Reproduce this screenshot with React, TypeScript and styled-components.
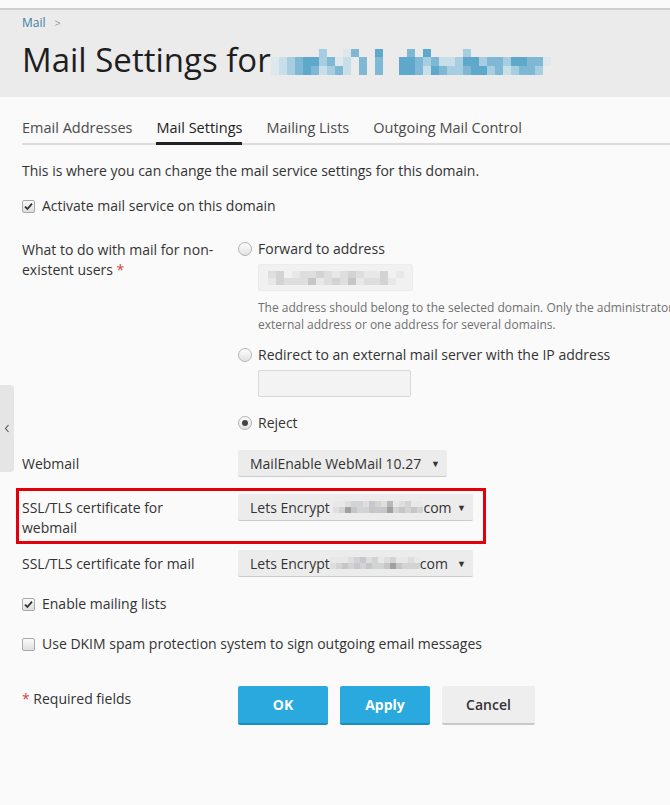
import React from "react";
import styled, { createGlobalStyle, css } from "styled-components";

const GlobalStyle = createGlobalStyle`
  html, body { margin: 0; padding: 0; }
  body {
    background: #fafafa;
    font-family: "Open Sans", "Liberation Sans", sans-serif;
    color: #333;
    overflow: hidden;
  }
  * { box-sizing: border-box; }
`;

const Page = styled.div`
  position: relative;
  min-height: 805px;
  padding-top: 8px;
  background: #fafafa;
`;

const Header = styled.header`
  background: #ebebeb;
  border-top: 2px solid #cfcfcf;
  padding: 5px 22px 17px;
`;

const Breadcrumb = styled.div`
  display: flex;
  align-items: center;
  gap: 9px;
  font-size: 12px;
  line-height: 16px;
  a {
    color: #3d7ea6;
    text-decoration: none;
  }
  span {
    color: #999;
    font-size: 11px;
  }
`;

const Title = styled.h1`
  margin: 9px 0 0;
  font-size: 33px;
  line-height: 40px;
  font-weight: 400;
  color: #1e1e1e;
  display: flex;
  align-items: center;
  svg { margin-top: 3px; margin-left: 0; }
`;

const Content = styled.main`
  padding: 21px 0 0 22px;
`;

const Tabs = styled.nav`
  display: flex;
  gap: 24px;
  border-bottom: 2px solid #dcdcdc;
`;

const Tab = styled.div<{ $active?: boolean }>`
  font-size: 14.5px;
  line-height: 20px;
  padding-bottom: 4px;
  margin-bottom: -2px;
  color: ${(p) => (p.$active ? "#222" : "#4a4a4a")};
  border-bottom: 3px solid ${(p) => (p.$active ? "#222" : "transparent")};
  ${(p) =>
    p.$active &&
    css`
      padding-bottom: 3px;
    `}
`;

const Intro = styled.p`
  margin: 16px 0 0;
  font-size: 14px;
  line-height: 20px;
  color: #333;
`;

const CheckRow = styled.label<{ $mt: number }>`
  display: flex;
  align-items: center;
  gap: 7px;
  margin-top: ${(p) => p.$mt}px;
  font-size: 14px;
  line-height: 20px;
  color: #333;
`;

const Box = styled.span`
  width: 13px;
  height: 13px;
  border: 1px solid #a9a9a9;
  border-radius: 2px;
  background: linear-gradient(#fbfbfb, #dedede);
  display: inline-flex;
  align-items: center;
  justify-content: center;
`;

const Checkbox = ({ checked }: { checked?: boolean }) => (
  <Box>
    {checked && (
      <svg width="9" height="9" viewBox="0 0 9 9">
        <path d="M1 4.6 L3.4 7 L8 1.6" fill="none" stroke="#333" strokeWidth="1.8" />
      </svg>
    )}
  </Box>
);

const Row = styled.div<{ $mt: number; $highlight?: boolean }>`
  display: grid;
  grid-template-columns: 216px auto;
  align-items: start;
  margin-top: ${(p) => p.$mt}px;
  ${(p) =>
    p.$highlight &&
    css`
      width: 458px;
      outline: 3px solid #e2000b;
      outline-offset: 3px;
    `}
`;

const Label = styled.div<{ $pt?: number }>`
  font-size: 14px;
  line-height: 20px;
  color: #333;
  padding-top: ${(p) => (p.$pt ?? 4)}px;
  padding-right: 22px;
`;

const Req = styled.span`
  color: #d0463b;
`;

const Field = styled.div`
  display: flex;
  flex-direction: column;
  align-items: flex-start;
`;

const RadioRow = styled.label<{ $mt?: number }>`
  display: flex;
  align-items: center;
  gap: 6px;
  margin-top: ${(p) => p.$mt ?? 0}px;
  font-size: 14px;
  line-height: 20px;
  color: #333;
  white-space: nowrap;
`;

const RadioCircle = styled.span<{ $checked?: boolean }>`
  width: 14px;
  height: 14px;
  border-radius: 50%;
  border: 1px solid #b3b3b3;
  background: linear-gradient(#fdfdfd, #e2e2e2);
  display: inline-flex;
  align-items: center;
  justify-content: center;
  &::after {
    content: "";
    width: 6px;
    height: 6px;
    border-radius: 50%;
    background: ${(p) => (p.$checked ? "#444" : "transparent")};
  }
`;

const TextInput = styled.div<{ $w: number; $mt: number; $plain?: boolean }>`
  width: ${(p) => p.$w}px;
  height: 27px;
  margin: ${(p) => p.$mt}px 0 0 20px;
  border-radius: 2px;
  background: ${(p) => (p.$plain ? "#f3f3f3" : "#f1f1f1")};
  border: 1px solid ${(p) => (p.$plain ? "#d9d9d9" : "#ececec")};
  display: flex;
  align-items: center;
  padding-left: 9px;
`;

const Help = styled.div`
  margin: 8px 0 0 20px;
  font-size: 12px;
  line-height: 17px;
  color: #707070;
  white-space: nowrap;
`;

const HelpLine = styled.div`
  display: block;
`;

const Select = styled.div<{ $w: number }>`
  width: ${(p) => p.$w}px;
  height: 27px;
  background: #ececec;
  border-bottom: 1px solid #cdcdcd;
  border-radius: 2px;
  display: flex;
  align-items: center;
  justify-content: space-between;
  padding: 0 5px 0 12px;
  font-size: 14px;
  color: #333;
  white-space: nowrap;
`;

const SelectText = styled.span`
  display: flex;
  align-items: center;
`;

const Arrow = styled.span`
  width: 11px;
  font-size: 9px;
  color: #333;
`;

const Footer = styled.div`
  display: grid;
  grid-template-columns: 216px auto;
  margin-top: 32px;
`;

const ReqNote = styled.div`
  font-size: 14px;
  line-height: 20px;
  padding-top: 3px;
  color: #333;
`;

const Buttons = styled.div`
  display: flex;
  gap: 12px;
`;

const Button = styled.button<{ $primary?: boolean; $w: number }>`
  width: ${(p) => p.$w}px;
  height: 39px;
  border: none;
  border-radius: 2px;
  font-family: "Open Sans", "Liberation Sans", sans-serif;
  font-size: 14px;
  font-weight: ${(p) => (p.$primary ? 700 : 600)};
  padding: 0;
  background: ${(p) => (p.$primary ? "#29a9de" : "#eeeeee")};
  color: ${(p) => (p.$primary ? "#fff" : "#333")};
  border-bottom: 2px solid ${(p) => (p.$primary ? "#1d8cbf" : "#c9c9c9")};
`;

const SideTab = styled.div`
  position: absolute;
  left: 0;
  top: 385px;
  width: 14px;
  height: 87px;
  background: #e5e5e5;
  border-radius: 0 4px 4px 0;
  display: flex;
  align-items: center;
  justify-content: center;
`;

type PixProps = { rows: string[]; colors: Record<string, string>; cell: number; rowH: number[] };
const Pixels = ({ rows, colors, cell, rowH }: PixProps) => {
  const w = Math.max(...rows.map((r) => r.length)) * cell;
  const h = rowH.reduce((a, b) => a + b, 0);
  let y = 0;
  const rects: React.ReactElement[] = [];
  rows.forEach((r, ri) => {
    r.split("").forEach((ch, ci) => {
      if (colors[ch]) {
        rects.push(
          <rect key={`${ri}-${ci}`} x={ci * cell} y={y} width={cell} height={rowH[ri]} fill={colors[ch]} />
        );
      }
    });
    y += rowH[ri];
  });
  return (
    <svg width={w} height={h} viewBox={`0 0 ${w} ${h}`} style={{ display: "block" }}>
      {rects}
    </svg>
  );
};

const blue = { a: "#5ea8cb", b: "#7fb8d4", c: "#a6cde0", d: "#c8dfe9", e: "#dde7ec" };
const gray = {
  a: "#b8b8b8",
  b: "#c6c6c6",
  c: "#d3d3d3",
  d: "#dedede",
  e: "#e8e8e8",
  p: "#c9c6cf",
  q: "#a0a0a0",
  r: "#cfd5d6",
};

export default function App() {
  return (
    <Page>
      <GlobalStyle />
      <Header>
        <Breadcrumb>
          <a href="#">Mail</a>
          <span>&gt;</span>
        </Breadcrumb>
        <Title>
          Mail Settings for
          <Pixels
            colors={blue}
            cell={8}
            rowH={[8, 9, 9]}
            rows={[
              "......c..eb..a...b.a....c...........",
              "edcbaacbed.b.b..aabcbddcaacbbcaabbe.",
              "edcbabdcbd.b.b..aabdabccbaacbdcbbc..",
            ]}
          />
        </Title>
      </Header>
      <Content>
        <Tabs>
          <Tab>Email Addresses</Tab>
          <Tab $active>Mail Settings</Tab>
          <Tab>Mailing Lists</Tab>
          <Tab>Outgoing Mail Control</Tab>
        </Tabs>
        <Intro>This is where you can change the mail service settings for this domain.</Intro>
        <CheckRow $mt={15}>
          <Checkbox checked />
          Activate mail service on this domain
        </CheckRow>

        <Row $mt={23}>
          <Label $pt={1}>
            What to do with mail for non-existent users <Req>*</Req>
          </Label>
          <Field>
            <RadioRow>
              <RadioCircle />
              Forward to address
            </RadioRow>
            <TextInput $w={155} $mt={5}>
              <Pixels
                colors={gray}
                cell={8}
                rowH={[7, 7]}
                rows={["dc.eddcdedcdeec.e", "ecdddbedcdbeddce."]}
              />
            </TextInput>
            <Help>
              <HelpLine>The address should belong to the selected domain. Only the administrator can specify an</HelpLine>
              <HelpLine>external address or one address for several domains.</HelpLine>
            </Help>
            <RadioRow $mt={12}>
              <RadioCircle />
              Redirect to an external mail server with the IP address
            </RadioRow>
            <TextInput $w={153} $mt={5} $plain />
            <RadioRow $mt={16}>
              <RadioCircle $checked />
              Reject
            </RadioRow>
          </Field>
        </Row>

        <Row $mt={17}>
          <Label>Webmail</Label>
          <Select $w={209}>
            <SelectText>MailEnable WebMail 10.27</SelectText>
            <Arrow>▼</Arrow>
          </Select>
        </Row>

        <Row $mt={17} $highlight>
          <Label>SSL/TLS certificate for webmail</Label>
          <Select $w={235}>
            <SelectText>
              Lets Encrypt&nbsp;
              <Pixels
                colors={gray}
                cell={6}
                rowH={[6, 6]}
                rows={["eedrcdpcdaedcee", "dcqbrcbpbqcbcbc"]}
              />
              com
            </SelectText>
            <Arrow>▼</Arrow>
          </Select>
        </Row>

        <Row $mt={12}>
          <Label>SSL/TLS certificate for mail</Label>
          <Select $w={235}>
            <SelectText>
              Lets Encrypt
              <Pixels
                colors={gray}
                cell={6}
                rowH={[6, 6]}
                rows={["eeedcpdcedceede", "dcbcpcbrcbqbccc"]}
              />
              com
            </SelectText>
            <Arrow>▼</Arrow>
          </Select>
        </Row>

        <CheckRow $mt={17}>
          <Checkbox checked />
          Enable mailing lists
        </CheckRow>
        <CheckRow $mt={20}>
          <Checkbox />
          Use DKIM spam protection system to sign outgoing email messages
        </CheckRow>

        <Footer>
          <ReqNote>
            <Req>*</Req> Required fields
          </ReqNote>
          <Buttons>
            <Button $primary $w={90}>OK</Button>
            <Button $primary $w={90}>Apply</Button>
            <Button $w={93}>Cancel</Button>
          </Buttons>
        </Footer>
      </Content>
      <SideTab>
        <svg width="6" height="9" viewBox="0 0 6 9">
          <path d="M4.5 1 L1.5 4.5 L4.5 8" fill="none" stroke="#555" strokeWidth="1.1" />
        </svg>
      </SideTab>
    </Page>
  );
}
